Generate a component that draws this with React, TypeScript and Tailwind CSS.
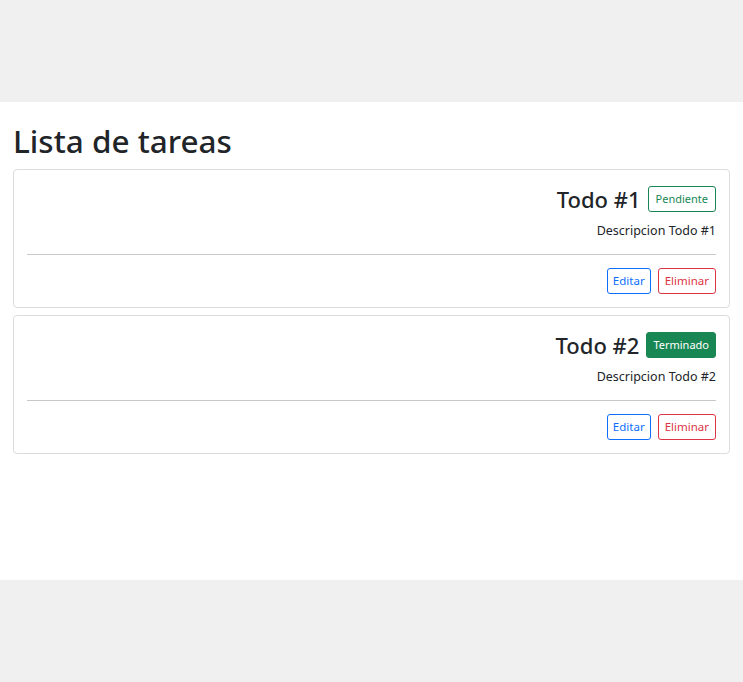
import React from "react";

const todos = [
  { id: 1, title: "Todo #1", desc: "Descripcion Todo #1", done: false },
  { id: 2, title: "Todo #2", desc: "Descripcion Todo #2", done: true },
];

export default function App() {
  return (
    <div
      className="w-[743px] h-[682px] bg-[#f0f0f0] flex flex-col"
      style={{ fontFamily: '"Noto Sans", "Open Sans", sans-serif' }}
    >
      <div className="h-[102px]" />
      <div className="h-[478px] bg-white px-[13px] pt-[19px] text-[#212529]">
        <h1 className="text-[31.5px] leading-[40px] font-medium mb-[8px]">Lista de tareas</h1>
        {todos.map((t) => (
          <div
            key={t.id}
            className="border border-[#dcdcdc] rounded-[4px] px-[13px] pt-[13px] pb-[13px] mb-[7px]"
          >
            <div className="flex justify-end items-center gap-[7px] h-[32px]">
              <span className="text-[22px] leading-[32px] font-medium">{t.title}</span>
              {t.done ? (
                <span className="h-[26px] px-[6px] flex items-center rounded-[3px] bg-[#198754] border border-[#198754] text-white text-[11px]">
                  Terminado
                </span>
              ) : (
                <span className="h-[26px] px-[7px] flex items-center rounded-[3px] border border-[#198754] text-[#198754] text-[11px]">
                  Pendiente
                </span>
              )}
            </div>
            <p className="text-right text-[12.5px] leading-[20px] mt-[6px]">{t.desc}</p>
            <hr className="border-0 border-t border-[#c8c8c8] mt-[13px] mb-[13px]" />
            <div className="flex justify-end gap-[7px]">
              <button className="h-[26px] px-[5px] rounded-[3px] border border-[#0d6efd] text-[#0d6efd] text-[11.5px] bg-white">
                Editar
              </button>
              <button className="h-[26px] px-[6px] rounded-[3px] border border-[#dc3545] text-[#dc3545] text-[11.5px] bg-white">
                Eliminar
              </button>
            </div>
          </div>
        ))}
      </div>
      <div className="flex-1" />
    </div>
  );
}
